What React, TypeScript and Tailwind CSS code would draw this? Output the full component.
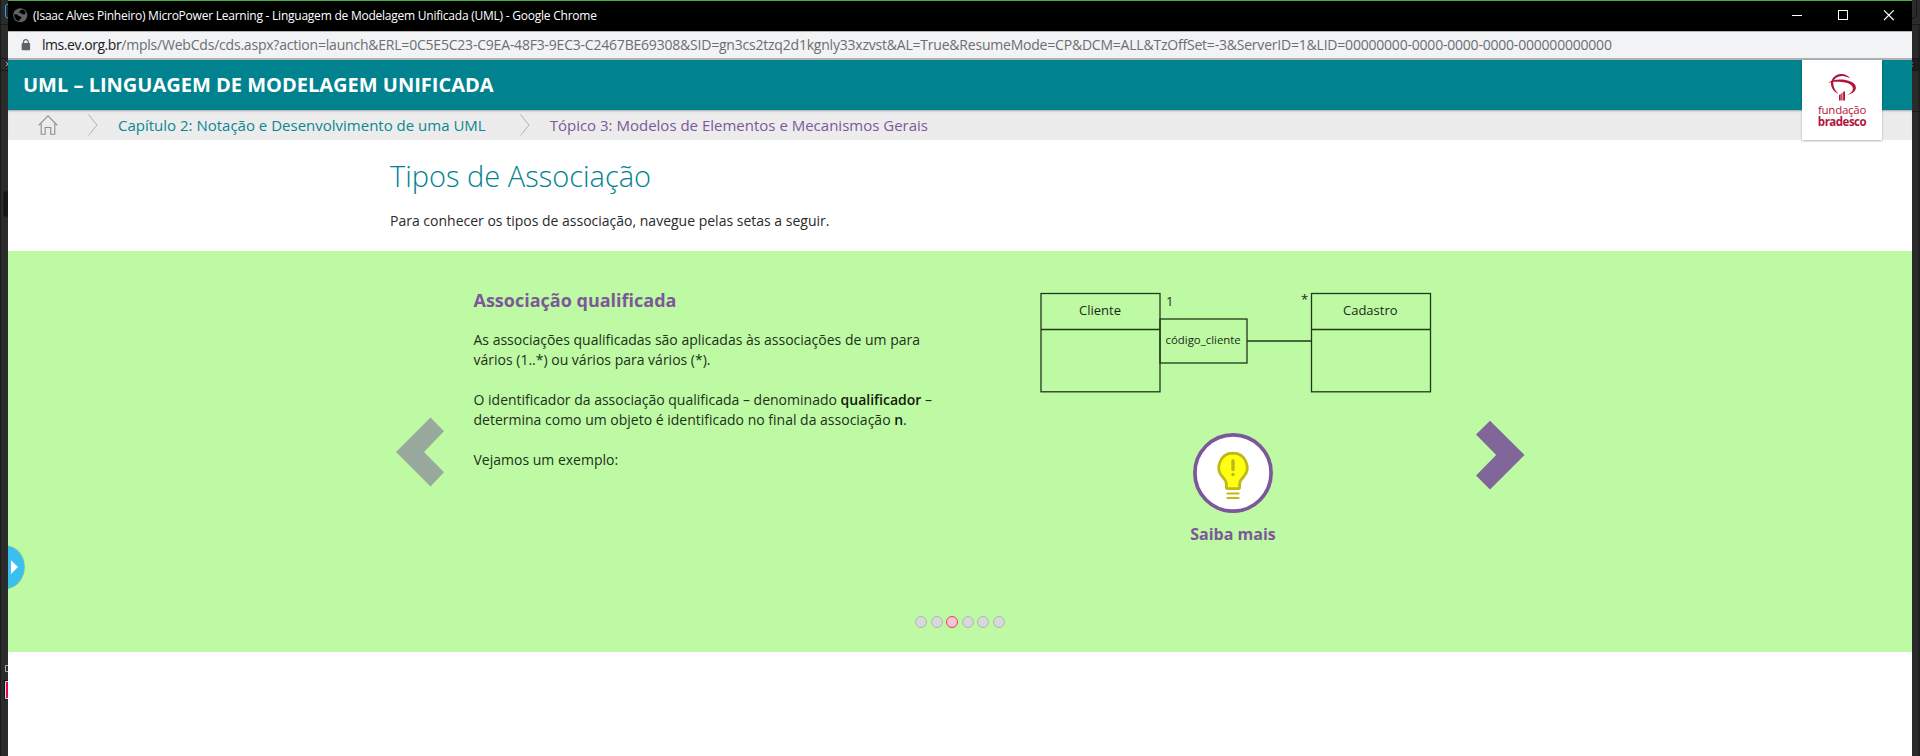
import React from "react";

function TitleBar() {
  return (
    <div className="flex h-[31px] items-start border-t border-[#43b243] bg-black text-white">
      <svg className="mt-[7px] ml-[5px] shrink-0" width="15" height="15" viewBox="0 0 15 15">
        <circle cx="7.2" cy="7.2" r="7" fill="#5f6368" />
        <path
          d="M7.5 2.2 10 1.6 12.6 4 12 6.4 9.4 6.2 7.6 5 6 4.4ZM1.2 6.2 4.6 6.5 5.5 8 7.8 8.4 8.6 10 7 11.2 6 13.2 3.6 12.2 1.4 9.2Z"
          fill="#000"
        />
      </svg>
      <span className="ml-[5px] whitespace-nowrap text-[12px] leading-[29px] tracking-[-0.235px]">
        (Isaac Alves Pinheiro) MicroPower Learning - Linguagem de Modelagem Unificada (UML) - Google Chrome
      </span>
      <svg className="mt-[9px] mr-[17px] ml-auto shrink-0" width="104" height="11" viewBox="0 0 104 11" stroke="#fff" fill="none">
        <path d="M1 5.5H11" />
        <rect x="47.5" y="0.5" width="9" height="9" />
        <path d="M93 0.3 102.7 10M102.7 0.3 93 10" strokeWidth="1.1" />
      </svg>
    </div>
  );
}

function AddressBar() {
  return (
    <div className="flex h-[29px] items-start border-t border-b-2 border-t-[#b5b5b5] border-b-[#aeb0b1] bg-[#f1f3f4]">
      <svg className="mt-[7px] ml-[13px] shrink-0" width="10" height="12" viewBox="0 0 10 12">
        <rect x="0.7" y="4" width="8.4" height="7.3" rx="0.8" fill="#5f6368" />
        <path d="M2.5 4.5V3a2.4 2.4 0 0 1 4.8 0v1.5" fill="none" stroke="#5f6368" strokeWidth="1.2" />
      </svg>
      <p className="ml-[11px] whitespace-nowrap text-[14px] leading-[26px] tracking-[-0.21px] text-[#6b6e72]">
        <span className="tracking-[-0.45px] text-[#202124]">lms.ev.org.br</span>
        /mpls/WebCds/cds.aspx?action=launch&amp;ERL=0C5E5C23-C9EA-48F3-9EC3-C2467BE69308&amp;SID=gn3cs2tzq2d1kgnly33xzvst&amp;AL=True&amp;ResumeMode=CP&amp;DCM=ALL&amp;TzOffSet=-3&amp;ServerID=1&amp;LID=00000000-0000-0000-0000-000000000000
      </p>
    </div>
  );
}

function Logo() {
  return (
    <div className="absolute top-0 right-[30px] flex h-20 w-20 flex-col items-center bg-white text-[#b3153a] shadow-[0_1px_2px_rgba(0,0,0,0.3)]">
      <svg className="mt-[13px] shrink-0" width="30" height="28" viewBox="0 0 30 28" fill="#b3153a">
        <path d="M4.300 8.500C5.800 3.500 9.800 0.900 14.500 0.900c3.800 0 6.800 1.500 8.600 4.600-2.600-1.900-5.200-2.700-8.400-2.600C10.900 3 8 4.800 6.400 8Z" />
        <path d="M1.200 9.900C5 7 9.500 6.300 14.500 6.600c9 .5 14.700 4 14.400 8.500-.2 3.500-4.200 6-8.900 6.900 3.800-1.700 6-3.800 5.900-6.500-.2-3.900-4.700-6.100-11.300-6.600-5.100-.4-9.600-.2-13.400 1Z" />
        <path d="M6.300 8C5.700 12.500 7.500 17 11.300 20.800 5.800 18.300 3.200 13.300 4.200 8.300Z" />
        <path d="M12 21.900 13.700 21V27.500H12ZM14.300 20.600 15.500 19.800V27.500H14.300ZM16.100 18.900 18 18V27.500H16.100Z" />
      </svg>
      <span className="mt-px text-[11.500px] leading-[15px] tracking-[-0.270px]">fundação</span>
      <span className="-mt-[3px] text-[11.500px] leading-[15px] font-bold tracking-[-0.500px]">bradesco</span>
    </div>
  );
}

function Separator() {
  return (
    <svg className="shrink-0" width="10" height="22" viewBox="0 0 10 22" fill="none" stroke="#b0b0b0">
      <path d="M0.500 0.500 9 11 0.500 21.500" />
    </svg>
  );
}

function CourseHeader() {
  return (
    <header className="relative">
      <h1 className="h-[50px] bg-[#00838f] pl-[15px] text-[20px] leading-[50px] font-bold text-white">
        UML – LINGUAGEM DE MODELAGEM UNIFICADA
      </h1>
      <nav className="flex h-[30px] items-center bg-[#ececec] text-[15px] shadow-[inset_0_2px_2px_-1px_rgba(0,0,0,0.3)]">
        <svg className="ml-[30px] shrink-0" width="20" height="20" viewBox="0 0 20 20" fill="none" stroke="#8e8e8e" strokeWidth="1.100">
          <path d="M0.600 10.300 10 0.900 19.400 10.300M3.200 8.500V19.300H7.200V12.500H12.700V19.300H16.800V8.500" />
        </svg>
        <span className="ml-[30px] flex">
          <Separator />
        </span>
        <span className="ml-5 whitespace-nowrap text-[#0b8791]">Capítulo 2: Notação e Desenvolvimento de uma UML</span>
        <span className="ml-[34px] flex">
          <Separator />
        </span>
        <span className="ml-5 whitespace-nowrap text-[#7c589b]">Tópico 3: Modelos de Elementos e Mecanismos Gerais</span>
      </nav>
      <Logo />
    </header>
  );
}

function AssociationDiagram() {
  return (
    <svg className="block shrink-0" width="392" height="108" viewBox="1040 286 392 108" fill="none" stroke="#1e3a1a" strokeWidth="1.300">
      <rect x="1041" y="293.500" width="119" height="98.300" />
      <path d="M1041 329.500H1160" />
      <rect x="1160" y="319" width="87" height="44" />
      <path d="M1247 341H1311.500" />
      <rect x="1311.500" y="293.500" width="119" height="98.300" />
      <path d="M1311.500 329.500H1430.500" />
      <g fill="#1a2a16" stroke="none" fontSize="13">
        <text x="1079" y="315">Cliente</text>
        <text x="1343" y="315">Cadastro</text>
        <text x="1165.500" y="344" fontSize="11.400">código_cliente</text>
        <text x="1166" y="306">1</text>
        <text x="1301" y="304">*</text>
      </g>
    </svg>
  );
}

function LearnMore() {
  return (
    <button className="mt-[39px] flex w-[110px] flex-col items-center self-center">
      <svg width="80" height="80" viewBox="0 0 80 80">
        <circle cx="40" cy="40" r="38.100" fill="#fff" stroke="#7c589b" strokeWidth="3.700" />
        <path
          d="M40 20.200A14.200 14.200 0 0 0 29.600 44C32.600 47.300 33.400 48.500 33.400 52.500V54.300Q33.400 55.600 34.700 55.600H45.300Q46.600 55.600 46.600 54.300V52.500C46.600 48.500 47.400 47.300 50.400 44A14.200 14.200 0 0 0 40 20.200Z"
          fill="#ffff14"
          stroke="#c0b915"
          strokeWidth="2.800"
        />
        <path d="M34.500 60.500H45.500M34.500 65H45.500" stroke="#c0b915" strokeWidth="2.200" strokeLinecap="round" />
        <path d="M40 28V36.500" stroke="#c0b915" strokeWidth="3.400" strokeLinecap="round" />
        <circle cx="40" cy="41.500" r="1.700" fill="#c0b915" />
      </svg>
      <span className="mt-[9px] text-[16px] leading-[24px] font-bold text-[#7c589b]">Saiba mais</span>
    </button>
  );
}

function Carousel() {
  return (
    <section className="relative flex h-[401px] flex-col bg-[#befaa3] pl-[388px]">
      <div className="flex h-[356px] items-start">
        <svg className="mt-[166px] shrink-0" width="48" height="70" viewBox="0 0 48 70">
          <path d="M0 35 34.500 0.500 48 14.300 28 35 48 55.300 34.500 69.500Z" fill="#9aa99e" />
        </svg>
        <article className="ml-[29.500px] w-[480.500px] pt-[37px] text-[14px] leading-5 text-[#22301c]">
          <h3 className="text-[18px] leading-[24px] font-bold text-[#7c589b]">Associação qualificada</h3>
          <p className="mt-[18px]">
            As associações qualificadas são aplicadas às associações de um para
            <br />
            vários (1..*) ou vários para vários (*).
          </p>
          <p className="mt-5">
            O identificador da associação qualificada – denominado <strong className="font-semibold text-[#101a0d]">qualificador</strong> –
            <br />
            determina como um objeto é identificado no final da associação <strong className="font-semibold text-[#101a0d]">n</strong>.
          </p>
          <p className="mt-5">Vejamos um exemplo:</p>
        </article>
        <div className="ml-[86px] flex w-[386px] flex-col items-start pt-[35px]">
          <AssociationDiagram />
          <LearnMore />
        </div>
        <svg className="mt-[169px] ml-[50px] shrink-0" width="49" height="70" viewBox="0 0 49 70">
          <path d="M48.500 35 14 0.700 0 14.500 20.200 35 0 55.500 14 69.400Z" fill="#806699" />
        </svg>
      </div>
      <div className="ml-[519px] flex gap-[3.600px] pt-[9px]">
        {[0, 1, 2, 3, 4, 5].map((i) => (
          <span
            key={i}
            className={
              i === 2
                ? "h-3 w-3 rounded-full border border-[#e23b63] bg-[#fbc4d6]"
                : "h-3 w-3 rounded-full border border-[#b5b5b5] bg-[#d8d8d8]"
            }
          />
        ))}
      </div>
      <svg className="absolute top-[293px] left-0" width="19" height="48" viewBox="0 0 19 48">
        <path d="M0 1.500C9 2.500 17 11.500 17 23S9 43.500 0 45Z" fill="#7aa06a" opacity="0.500" />
        <path d="M0 2.200C8.500 3.200 16.300 12 16.300 23S8.500 43 0 44.500Z" fill="#39c0f0" />
        <path d="M3 16.200 10 23 3 30Z" fill="#fff" />
      </svg>
    </section>
  );
}

function LeftEdge() {
  return (
    <svg className="block shrink-0" width="8" height="756" viewBox="0 0 8 756" fill="none">
      <path d="M0 0H8V756H0Z" fill="#2b2b2b" />
      <path d="M0 0H1V756H0Z" fill="#1a1a1a" />
      <path d="M1 24.500H8M1 58.500H8M1 70.500H8" stroke="#181818" />
      <path d="M8 4.500H7Q5.500 4.500 5.500 6V16Q5.500 18 8 18" stroke="#2ba4d3" />
      <path d="M6 62 8 64 6 66" stroke="#aaa" />
      <path d="M8 192H5Q4 192 4 194V214Q4 216 5 216H8" fill="#171717" stroke="#111" />
      <path d="M8 665.500H5.500V671.500H8" stroke="#aaa" />
      <path d="M4.500 680.500H8V699H4.500Z" stroke="#111" />
      <path d="M8 681.500H5.500V698.500H8" fill="#d8095a" stroke="#ddd" />
    </svg>
  );
}

function RightEdge() {
  return (
    <svg className="block shrink-0" width="8" height="756" viewBox="0 0 8 756" fill="none">
      <path d="M0 0H8V756H0Z" fill="#2b2b2b" />
      <path d="M0 58H8V70H0Z" fill="#1d1d1d" />
      <path d="M0 24.500H8M0 58.500H8M0 70.500H8M0 111.500H8M7 25V756M4.500 0V15Q4.500 18 0 18.500" stroke="#181818" />
      <path d="M0 63H1M0 66H1" stroke="#888" />
    </svg>
  );
}

export default function App() {
  return (
    <div className="flex h-[756px] w-[1920px] overflow-hidden bg-[#2b2b2b] font-['Open_Sans',sans-serif]">
      <LeftEdge />
      <div className="w-[1904px] bg-white">
        <TitleBar />
        <AddressBar />
        <CourseHeader />
        <div className="h-[111px] pt-4 pl-[382px]">
          <h2 className="text-[29px] leading-[40px] font-light text-[#00838f]">Tipos de Associação</h2>
          <p className="mt-[15px] text-[14px] leading-5 text-[#2a2a2a]">
            Para conhecer os tipos de associação, navegue pelas setas a seguir.
          </p>
        </div>
        <Carousel />
      </div>
      <RightEdge />
    </div>
  );
}
